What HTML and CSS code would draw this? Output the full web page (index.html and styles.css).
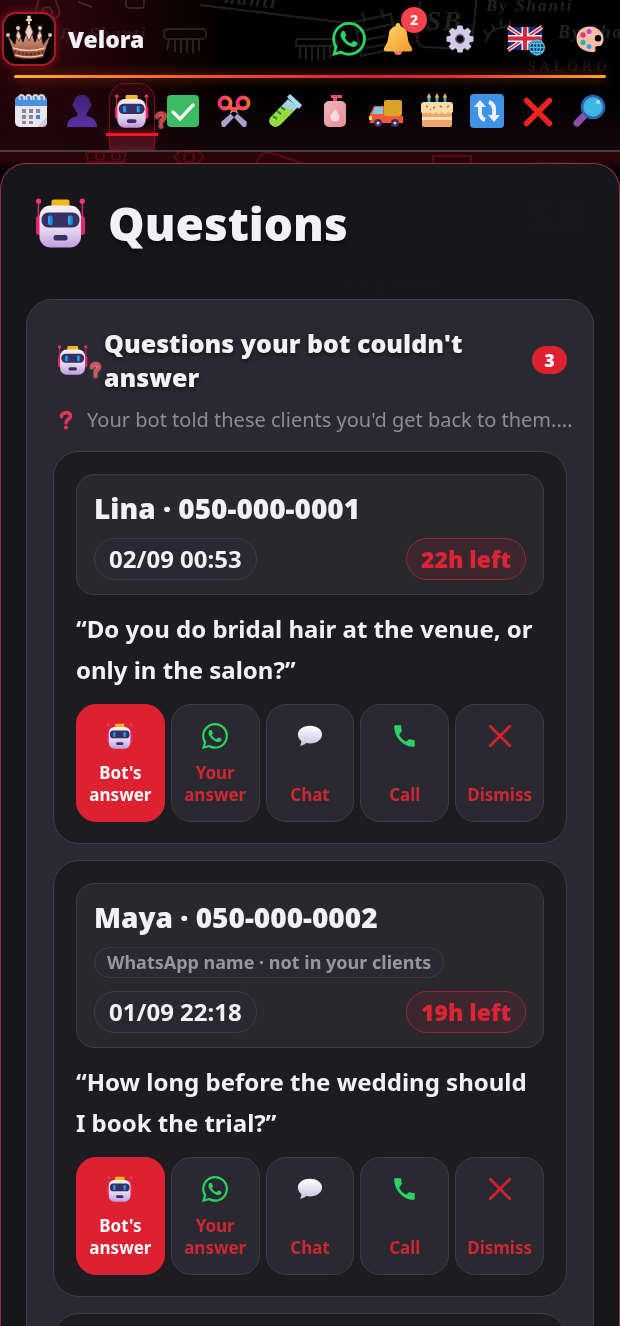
FILE: index.html
```html
<!DOCTYPE html>
<html lang="en">
<head>
    <meta charset="UTF-8">
    <meta name="viewport" content="width=device-width, initial-scale=1.0">
    <title>Velora</title>
    <link rel="stylesheet" href="styles.css">
</head>
<body>
    <!-- icons -->
    <svg class="defs" aria-hidden="true">
        <defs>
            <linearGradient id="gHead" x1="0" y1="0" x2="0" y2="1"><stop offset="0" stop-color="#f6f0f7"/><stop offset=".6" stop-color="#e2d5ee"/><stop offset="1" stop-color="#c39be2"/></linearGradient>
            <linearGradient id="gEye" x1="0" y1="0" x2="1" y2="0"><stop offset="0" stop-color="#36b7f5"/><stop offset="1" stop-color="#0f6fc9"/></linearGradient>
            <linearGradient id="gBell" x1="0" y1="0" x2="1" y2="1"><stop offset="0" stop-color="#ffd768"/><stop offset="1" stop-color="#f39a2c"/></linearGradient>
            <linearGradient id="gRing" x1="0" y1="0" x2="1" y2="0"><stop offset="0" stop-color="#f0307c"/><stop offset="1" stop-color="#f5683a"/></linearGradient>
            <linearGradient id="gUser" x1="0" y1="0" x2="0" y2="1"><stop offset="0" stop-color="#3d2270"/><stop offset="1" stop-color="#5a2fa5"/></linearGradient>
            <linearGradient id="gCrown" x1="0" y1="0" x2="0" y2="1"><stop offset="0" stop-color="#d9b7a6"/><stop offset=".6" stop-color="#b5745c"/><stop offset="1" stop-color="#7c3626"/></linearGradient>
            <linearGradient id="gChat" x1="0" y1="0" x2="0" y2="1"><stop offset="0" stop-color="#ffffff"/><stop offset="1" stop-color="#c9c0e0"/></linearGradient>
            <linearGradient id="gSoap" x1="0" y1="0" x2="1" y2="1"><stop offset="0" stop-color="#f5b3b6"/><stop offset="1" stop-color="#e08f98"/></linearGradient>
        </defs>
        <symbol id="robot" viewBox="0 0 50 50">
            <path d="M2.4 4v20M46.400 4v20" stroke="#d62563" stroke-width="1.600"/>
            <circle cx="2.600" cy="3.200" r="2.600" fill="#f0356b"/><circle cx="46.200" cy="3.200" r="2.600" fill="#f0356b"/>
            <rect x="0" y="18" width="9" height="19" rx="3" fill="#e8256f"/><rect x="40" y="18" width="9" height="19" rx="3" fill="#e8256f"/>
            <rect x="15.500" y="1.600" width="18" height="9" rx="2" fill="#f7b51e"/>
            <rect x="3.500" y="7.500" width="41.500" height="42" rx="11" fill="url(#gHead)"/>
            <rect x="5.500" y="14.500" width="38" height="15" rx="7" fill="#382f63"/>
            <rect x="12" y="17.500" width="5" height="9.500" rx="2" fill="url(#gEye)"/><rect x="32" y="17.500" width="5" height="9.500" rx="2" fill="url(#gEye)"/>
            <rect x="17.500" y="37" width="14" height="5.500" rx="2.500" fill="#382f63"/>
        </symbol>
        <symbol id="qmark" viewBox="0 0 14 20">
            <path d="M2.500 6.500C2 2 11.500 1 11.500 6c0 3.500-4.500 3-4.500 7" fill="none" stroke="currentColor" stroke-width="3.600" stroke-linecap="round"/>
            <circle cx="7" cy="17.600" r="2.100" fill="currentColor"/>
        </symbol>
        <symbol id="whatsapp" viewBox="0 0 24 24">
            <path fill="#2bd366" d="M17.472 14.382c-.297-.149-1.758-.867-2.030-.967-.273-.099-.471-.148-.670.150-.197.297-.767.966-.940 1.164-.173.199-.347.223-.644.075-.297-.150-1.255-.463-2.390-1.475-.883-.788-1.480-1.761-1.653-2.059-.173-.297-.018-.458.130-.606.134-.133.298-.347.446-.520.149-.174.198-.298.298-.497.099-.198.050-.371-.025-.520-.075-.149-.669-1.612-.916-2.207-.242-.579-.487-.500-.669-.510-.173-.008-.371-.010-.570-.010-.198 0-.520.074-.792.372-.272.297-1.040 1.016-1.040 2.479 0 1.462 1.065 2.875 1.213 3.074.149.198 2.096 3.200 5.077 4.487.709.306 1.262.489 1.694.625.712.227 1.360.195 1.871.118.571-.085 1.758-.719 2.006-1.413.248-.694.248-1.289.173-1.413-.074-.124-.272-.198-.570-.347m-5.421 7.403h-.004a9.870 9.870 0 01-5.031-1.378l-.361-.214-3.741.982.998-3.648-.235-.374a9.860 9.860 0 01-1.510-5.260c.001-5.450 4.436-9.884 9.888-9.884 2.640 0 5.122 1.030 6.988 2.898a9.825 9.825 0 012.893 6.994c-.003 5.450-4.437 9.884-9.885 9.884m8.413-18.297A11.815 11.815 0 0012.050 0C5.495 0 .160 5.335.157 11.892c0 2.096.547 4.142 1.588 5.945L.057 24l6.305-1.654a11.882 11.882 0 005.683 1.448h.005c6.554 0 11.890-5.335 11.893-11.893a11.821 11.821 0 00-3.480-8.413z"/>
        </symbol>
        <symbol id="chat" viewBox="0 0 28 24">
            <path d="M14 1c7.500 0 13 4 13 9.500S21.500 20 14 20c-1.500 0-3-.2-4.300-.5C8 21.500 5.500 22.500 3 22.500c1.300-1.500 1.800-3.200 1.600-5C2.300 15.700 1 13.200 1 10.500 1 5 6.500 1 14 1z" fill="url(#gChat)"/>
        </symbol>
        <symbol id="phone" viewBox="0 0 24 24">
            <path fill="#2bd366" d="M6.600 10.800c1.500 2.800 3.800 5.200 6.600 6.600l2.200-2.200c.3-.3.700-.4 1-.2 1.100.4 2.300.6 3.600.6.600 0 1 .4 1 1V21c0 .6-.4 1-1 1C10.600 22 2 13.400 2 3c0-.6.400-1 1-1h4.500c.6 0 1 .4 1 1 0 1.300.2 2.500.6 3.600.1.300 0 .7-.2 1z"/>
        </symbol>
        <symbol id="close" viewBox="0 0 24 24">
            <path d="M3 3l18 18M21 3l-18 18" fill="none" stroke="#d0222f" stroke-width="2.600" stroke-linecap="round"/>
        </symbol>
    </svg>

    <!-- background doodles -->
    <svg class="doodles" viewBox="0 0 620 330" aria-hidden="true">
        <g class="doodle-lines">
            <path d="M36 10l3-12h16l4 12q2 8-6 8H42q-8 0-6-8zM42 12a5 5 0 1010 0a5 5 0 10-10 0M126 -4v9q0 3 4 3h10q4 0 4-3v-9M78 2l14 5M168 29h34q4 0 4 4v3q0 3-4 3h-34q-4 0-4-4v-2q0-4 4-4zM169 40l-2 10M175 40v12M181 40v13M187 40v13M193 40v13M199 40v11"/>
            <path d="M200 5l155 19M298 39h36q3 0 3 3v4h-41v-4q0-3 2-3zM300 47v12M306 47v13M312 47v14M318 47v14M324 47v13M330 47v12"/>
            <path d="M355 22l36-8 6 34-36 8zM357 32l35-8M362 12l3 10M381 9l3 10M364 40l22-4M366 48l22-4M426 -5l45 2q6 1 5 8l-4 36q-1 8-8 8l-39-2q-8-1-8-8l3-38"/>
            <path d="M486 42q2-14 20-15M484 30l5 8M492 24l3 7M501 20v7M510 20l-1 8"/>
        </g>
        <g class="doodle-lines doodle-red">
            <path d="M86 152h40l-2 10H88zM96 156a4 4 0 108 0a4 4 0 10-8 0M112 156a4 4 0 108 0a4 4 0 10-8 0M174 157l6-6h18l6 6-6 6h-18zM184 157a5 5 0 1010 0a5 5 0 10-10 0M256 164q4-14 16-11l32 11M433 164v-8h38v10M433 164v14h38v-14M525 164q30-2 60 0"/>
            <path d="M510 176v78q0 12 12 12h76M40 190h60v40H40zM250 180l40 30M270 275h38v14h-38z"/>
        </g>
        <g class="doodle-text">
            <text x="60" y="39" font-size="17" opacity=".6">By Shanti</text>
            <text x="224" y="3" font-size="20" transform="rotate(6 224 3)">hanti</text>
            <text x="426" y="30" font-size="27">SB</text>
            <text x="486" y="11" font-size="17">By Shanti</text>
            <text x="558" y="38" font-size="18">By Shanti</text>
            <text class="caps" x="528" y="71" font-size="14" opacity=".6">SALORO</text>
            <text x="526" y="232" font-size="46">SB</text>
            <text class="caps" x="345" y="292" font-size="18">SALORO</text>
        </g>
    </svg>

    <div class="app">
        <header class="header">
            <div class="topbar">
                <a href="#" class="brand">
                    <span class="logo">
                        <svg viewBox="0 0 50 50">
                            <ellipse cx="25" cy="42" rx="15" ry="3" fill="#a3181c"/>
                            <path d="M11 43L4 22l7 9 3-14 5 12 6-17 6 17 5-12 3 14 7-9-7 21q-14 4-28 0z" fill="url(#gCrown)"/>
                            <path d="M25 9l-4 9 4 9 4-9zM14 16l-2 6 3 5 2-5zM36 16l-3 6 2 5 3-5z" fill="#ead5c9" stroke="#7a4a3c" stroke-width="1"/>
                            <path d="M25 3v7M22 6h6" stroke="#e9d2c5" stroke-width="2"/>
                            <circle cx="25" cy="3.500" r="2" fill="#e9cfc3"/><circle cx="14" cy="14" r="2" fill="#e9cfc3"/><circle cx="36" cy="14" r="2" fill="#e9cfc3"/><circle cx="4" cy="21" r="2" fill="#d9b9aa"/><circle cx="46" cy="21" r="2" fill="#d9b9aa"/>
                            <path d="M9 34q16 5 32 0M11 41q14 4 28 0" fill="none" stroke="#efc7b2" stroke-width="1.400"/>
                            <path d="M10 37.500q15 5 30 0" fill="none" stroke="#5f2a20" stroke-width="2" stroke-dasharray="2 2"/>
                        </svg>
                    </span>
                    <span class="brand-name">Velora</span>
                </a>
                <div class="tools">
                    <div class="tools-chat">
                        <button class="tool" aria-label="WhatsApp"><svg width="34" height="34"><use href="#whatsapp"/></svg></button>
                        <button class="tool" aria-label="Notifications">
                            <svg width="32" height="32" viewBox="0 0 32 32">
                                <circle cx="16" cy="28" r="4" fill="#f2786b"/>
                                <path d="M16 0q2.500 0 2.500 3 6.500 2 7 10 .5 7 4 11 2 3.500-1 4.500h-25q-3-1-1-4.500 3.500-4 4-11 .5-8 7-10 0-3 2.500-3z" fill="url(#gBell)"/>
                            </svg>
                            <span class="count">2</span>
                        </button>
                    </div>
                    <button class="tool" aria-label="Settings">
                        <svg width="28" height="28" viewBox="0 0 28 28">
                            <g fill="#d5cae6"><path id="tooth" d="M11.500 0.500h5l1 5h-7zM11.500 27.500h5l1-5h-7z"/><use href="#tooth" transform="rotate(45 14 14)"/><use href="#tooth" transform="rotate(90 14 14)"/><use href="#tooth" transform="rotate(135 14 14)"/></g>
                            <circle cx="14" cy="14" r="7.400" fill="#08070a" stroke="#d5cae6" stroke-width="6"/>
                            <circle cx="14" cy="14" r="4.200" fill="#08070a" stroke="#6d6580" stroke-width="1.200"/>
                        </svg>
                    </button>
                    <button class="tool" aria-label="Language">
                        <svg width="38" height="34" viewBox="0 0 38 34">
                            <rect x="2" y="5" width="34" height="23" fill="#1d2a73"/>
                            <path d="M2 5l34 23M36 5L2 28" stroke="#f4f1f5" stroke-width="4"/>
                            <path d="M2 5l34 23M36 5L2 28" stroke="#d92840" stroke-width="1.600"/>
                            <path d="M19 5v23M2 16.500h34" stroke="#f4f1f5" stroke-width="7"/>
                            <path d="M19 5v23M2 16.500h34" stroke="#d92840" stroke-width="4"/>
                            <circle cx="31" cy="25.500" r="8" fill="#0a2f45"/>
                            <g fill="none" stroke="#55bdf0" stroke-width="1.300"><circle cx="31" cy="25.500" r="7.300"/><ellipse cx="31" cy="25.500" rx="3.500" ry="7.300"/><path d="M31 18v15M23.700 25.500h14.600M25 21.500h12M25 29.500h12"/></g>
                        </svg>
                    </button>
                    <button class="tool" aria-label="Theme">
                        <svg width="28" height="28" viewBox="0 0 28 28">
                            <path fill-rule="evenodd" d="M13 1.500C20 1 27 6 27.500 13c.3 5-2 8.500-5 8-2.500-.5-4 1-3 3.500.5 2-1.500 3-4.500 2.500C6 26 0 21 .5 13 1 6 6 2 13 1.500zM22 10a3.200 3.200 0 100 6.400 3.200 3.200 0 000-6.400z" fill="#f7bda5"/>
                            <circle cx="7" cy="10" r="2.700" fill="#e23673"/><circle cx="13" cy="6.500" r="2.500" fill="#b04fd8"/><circle cx="7" cy="17.500" r="2.700" fill="#2fb5a6"/><circle cx="13" cy="21.500" r="2.500" fill="#3f9be8"/>
                        </svg>
                    </button>
                </div>
            </div>
            <div class="rule"></div>
            <nav class="nav">
                <a href="#" class="tab" aria-label="Calendar">
                    <svg viewBox="0 0 34 34">
                        <rect x="1" y="2" width="32" height="31" rx="5" fill="#e9e6f0"/><path d="M1 12V7q0-5 5-5h22q5 0 5 5v5z" fill="#4a8fe0"/>
                        <g fill="none" stroke="#d9d9e4" stroke-width="1.800"><path d="M6 6q-2-5 1.500-5T10 6M13 6q-2-5 1.500-5T17 6M20 6q-2-5 1.500-5T24 6M26 6q-2-5 1.500-5T30 6"/></g>
                        <path d="M8 15h4v4H8zM15 15h4v4h-4zM22 15h4v4h-4zM8 21h4v4H8zM15 21h4v4h-4zM8 27h4v3H8zM15 27h4v3h-4z" fill="#8a879a"/><path d="M22 21h4v4h-4z" fill="#2c86dd"/><path d="M23 33l10-10v5q0 5-5 5z" fill="#cfccd8"/>
                    </svg>
                </a>
                <a href="#" class="tab" aria-label="Clients">
                    <svg viewBox="0 0 34 34"><path d="M17 1c5.500 0 8 3.500 8 7.500 2 0 2 5-.5 5.500-.6 2.500-1.700 3.800-3 5v3c6 1 10.500 4 10.500 11H2c0-7 4.500-10 10.500-11v-3c-1.300-1.200-2.400-2.500-3-5C7 13.500 7 8.500 9 8.500 9 4.500 11.500 1 17 1z" fill="url(#gUser)"/></svg>
                </a>
                <a href="#" class="tab active" aria-label="Questions" aria-current="page">
                    <svg viewBox="0 0 50 50"><use href="#robot"/></svg>
                    <svg class="tab-mark"><use href="#qmark"/></svg>
                </a>
                <a href="#" class="tab" aria-label="Tasks">
                    <svg viewBox="0 0 34 34"><rect x="1" y="1" width="32" height="32" rx="4" fill="#3dbb63"/><path d="M7 18l7 7 13-14" fill="none" stroke="#f1f5f2" stroke-width="3.400" stroke-linecap="round"/></svg>
                </a>
                <a href="#" class="tab" aria-label="Services">
                    <svg viewBox="0 0 34 34">
                        <path d="M15 15L30 28l-1 5h-3L13 19zM19 15L4 28l1 5h3l13-14z" fill="#a9a0c9"/>
                        <circle cx="8" cy="9" r="5.500" fill="none" stroke="url(#gRing)" stroke-width="4"/><circle cx="26" cy="9" r="5.500" fill="none" stroke="url(#gRing)" stroke-width="4"/>
                        <path d="M12 13l5 3 5-3" fill="none" stroke="#f5583f" stroke-width="4"/>
                    </svg>
                </a>
                <a href="#" class="tab" aria-label="Formulas">
                    <svg viewBox="0 0 34 34">
                        <path d="M20 5L2 24q-2 6 3 8 4 2 8-2L30 13z" fill="#a8cfe2"/><path d="M14 12L2 24q-2 6 3 8 4 2 8-2l13-14q-6 0-12-4z" fill="#92dc3c"/>
                        <path d="M19 3l3-3 12 11-3 4z" fill="#a5dcf5"/><path d="M13 13l4 3M9 17l4 3M5 22l4 3" stroke="#287f36" stroke-width="2"/>
                    </svg>
                </a>
                <a href="#" class="tab" aria-label="Products">
                    <svg viewBox="0 0 34 34"><path d="M13 1h11v3h-5v4h-4V4h-2z" fill="#e84b66"/><rect x="6" y="7" width="22" height="26" rx="5" fill="url(#gSoap)"/><path d="M17 15c3 4 4.500 6 4.500 8a4.500 4.500 0 01-9 0c0-2 1.500-4 4.500-8z" fill="#f8dadd"/></svg>
                </a>
                <a href="#" class="tab" aria-label="Suppliers">
                    <svg viewBox="0 0 34 34">
                        <path d="M1 20L5 12h12v17H1z" fill="#ef5a31"/><path d="M3 20l3-7h8v7z" fill="#7dc9ee"/><rect x="15" y="6" width="18" height="16" rx="2" fill="#dba325"/><path d="M1 22h33v7H1z" fill="#ef5a31"/><path d="M0 22h3v4H0z" fill="#ffd85b"/>
                        <circle cx="9" cy="29" r="4" fill="#3d2c5e"/><circle cx="26" cy="29" r="4" fill="#3d2c5e"/><circle cx="9" cy="29" r="1.600" fill="#d4cbe8"/><circle cx="26" cy="29" r="1.600" fill="#d4cbe8"/>
                    </svg>
                </a>
                <a href="#" class="tab" aria-label="Birthdays">
                    <svg viewBox="0 0 34 34">
                        <path d="M9 3v8M17 3v8M25 3v8" stroke="#2c9ebd" stroke-width="3"/><path d="M9-1l2 4-2 2-2-2zM17-1l2 4-2 2-2-2zM25-1l2 4-2 2-2-2z" fill="#f6b13c"/>
                        <rect x="2" y="12" width="30" height="21" rx="2" fill="#efa66c"/><path d="M2 23h30v3H2z" fill="#f8e0b8"/><path d="M1 11q0-3 3-3h26q3 0 3 3v7q-3 3-5 0-3 4-6 0-3 4-6 0-3 4-6 0-2 3-4 0-3 3-5 0z" fill="#f2dfa8"/>
                        <path d="M6 12l2 1M13 14l2-1M20 12l2 1M27 13l2-1M10 16l1-1" stroke="#e05574" stroke-width="1.400"/>
                    </svg>
                </a>
                <a href="#" class="tab" aria-label="Sync">
                    <svg viewBox="0 0 34 34"><rect x="0" y="0" width="34" height="34" rx="4" fill="#3e93e6"/><path d="M15 26Q9 24 10 15V12M19 8q6 2 5 11v3" fill="none" stroke="#f2f1f7" stroke-width="4"/><path d="M4 13l6-7 6 7zM18 21l6 7 6-7z" fill="#f2f1f7"/></svg>
                </a>
                <a href="#" class="tab" aria-label="Cancelled">
                    <svg viewBox="0 0 34 34"><path d="M5.500 6.500l23 23M28.500 6.500l-23 23" stroke="#e8241d" stroke-width="5.500" stroke-linecap="round"/></svg>
                </a>
                <a href="#" class="tab" aria-label="Search">
                    <svg viewBox="0 0 34 34"><path d="M13 21l-8 8" stroke="#8f4ea8" stroke-width="7" stroke-linecap="round"/><circle cx="21" cy="13" r="11" fill="#3fb6e2" stroke="#2865ae" stroke-width="2.600"/><circle cx="26" cy="8" r="2" fill="#a5e2f5"/></svg>
                </a>
            </nav>
        </header>

        <main class="panel">
            <div class="page-title">
                <svg width="50" height="50"><use href="#robot"/></svg>
                <h1>Questions</h1>
            </div>

            <section class="inbox">
                <div class="inbox-head">
                    <span class="bot">
                        <svg width="30" height="30"><use href="#robot"/></svg>
                        <svg class="bot-mark"><use href="#qmark"/></svg>
                    </span>
                    <h2>Questions your bot couldn't answer</h2>
                    <span class="total">3</span>
                </div>
                <div class="hint">
                    <svg width="14" height="20"><use href="#qmark"/></svg>
                    <p>Your bot told these clients you'd get back to them....</p>
                </div>

                <article class="card">
                    <div class="client">
                        <h3>Lina · 050-000-0001</h3>
                        <div class="meta">
                            <span class="pill">02/09 00:53</span>
                            <span class="pill left">22h left</span>
                        </div>
                    </div>
                    <p class="question">“Do you do bridal hair at the venue, or only in the salon?”</p>
                    <div class="actions">
                        <button class="action primary"><svg><use href="#robot"/></svg><span>Bot's answer</span></button>
                        <button class="action"><svg><use href="#whatsapp"/></svg><span>Your answer</span></button>
                        <button class="action"><svg><use href="#chat"/></svg><span>Chat</span></button>
                        <button class="action"><svg><use href="#phone"/></svg><span>Call</span></button>
                        <button class="action"><svg><use href="#close"/></svg><span>Dismiss</span></button>
                    </div>
                </article>

                <article class="card">
                    <div class="client">
                        <h3>Maya · 050-000-0002</h3>
                        <span class="note">WhatsApp name · not in your clients</span>
                        <div class="meta">
                            <span class="pill">01/09 22:18</span>
                            <span class="pill left">19h left</span>
                        </div>
                    </div>
                    <p class="question">“How long before the wedding should I book the trial?”</p>
                    <div class="actions">
                        <button class="action primary"><svg><use href="#robot"/></svg><span>Bot's answer</span></button>
                        <button class="action"><svg><use href="#whatsapp"/></svg><span>Your answer</span></button>
                        <button class="action"><svg><use href="#chat"/></svg><span>Chat</span></button>
                        <button class="action"><svg><use href="#phone"/></svg><span>Call</span></button>
                        <button class="action"><svg><use href="#close"/></svg><span>Dismiss</span></button>
                    </div>
                </article>

                <article class="card"></article>
            </section>
        </main>
    </div>
</body>
</html>
```
FILE: styles.css
```css
*{
  box-sizing: border-box;
  margin: 0;
  padding: 0;
}
body{
  background: #050304;
  color: #f3f1f6;
  font-family: "Noto Sans", "Open Sans", sans-serif;
}
button{
  border: none;
  background: none;
  font-family: inherit;
  cursor: pointer;
}
a{
  color: inherit;
  text-decoration: none;
}
svg{
  display: block;
  overflow: visible;
}
.defs{
  position: absolute;
  width: 0;
  height: 0;
}
.doodles{
  position: absolute;
  top: 0;
  left: 0;
  width: 100%;
  z-index: 1;
  overflow: hidden;
  pointer-events: none;
}
.doodle-lines{
  fill: none;
  stroke: #fff;
  stroke-width: 2;
  opacity: .12;
}
.doodle-red{
  stroke: #e01838;
  opacity: .25;
}
.doodle-text{
  fill: #fff;
  opacity: .13;
  font-family: "Liberation Serif", serif;
  font-style: italic;
  font-weight: bold;
  letter-spacing: 2px;
}
.caps{
  font-style: normal;
  letter-spacing: 4px;
}
.app{
  display: flex;
  flex-direction: column;
  height: 100vh;
  overflow: hidden;
  background: linear-gradient(#050304, #2a0409 160px, #050304 170px);
}

/* header */
.header{
  background: radial-gradient(circle at 5% 20%, #32060c, transparent 35%), linear-gradient(#000 60%, #12060a);
  border-bottom: 2px solid #444045;
}
.topbar{
  display: flex;
  justify-content: space-between;
  align-items: center;
  height: 75px;
  padding: 2px 16px 0 2px;
  position: relative;
  z-index: 2;
}
.brand{
  display: flex;
  align-items: center;
  gap: 12px;
}
.logo{
  width: 54px;
  height: 54px;
  border: 2px solid #a81c2a;
  border-radius: 14px;
  background: #080203;
  box-shadow: 0 0 8px #8a1220;
}
.brand-name{
  font-size: 23px;
  font-weight: 900;
}
.tools{
  display: flex;
  align-items: center;
  gap: 32px;
}
.tools-chat{
  display: flex;
  align-items: center;
  gap: 16px;
}
.tool{
  position: relative;
}
.count{
  position: absolute;
  top: -16px;
  right: -13px;
  width: 26px;
  height: 26px;
  border-radius: 50%;
  background: #f8444c;
  color: #fff;
  font-size: 14px;
  font-weight: 800;
  line-height: 26px;
}
.rule{
  height: 3px;
  margin: 0 14px;
  border-radius: 2px;
  background: linear-gradient(90deg, #fbb03b, #f4502a 33%, #d81f3e 60%, #e8302e 75%, #fba834);
  box-shadow: 0 0 12px #b4480f;
}
.nav{
  display: flex;
  justify-content: space-between;
  padding: 0 14px;
  height: 72px;
}
.tab{
  position: relative;
  width: 34px;
  padding-top: 16px;
}
.tab svg{
  position: relative;
  width: 34px;
  height: 34px;
}
.tab.active::before{
  content: "";
  position: absolute;
  top: 5px;
  bottom: 0;
  left: -6px;
  right: -6px;
  border: 1px solid #6f1422;
  border-bottom: none;
  border-radius: 16px 16px 0 0;
  background: linear-gradient(#30060e, #10030a 60%, #5a1722);
}
.tab.active::after{
  content: "";
  position: absolute;
  top: 55px;
  left: -9px;
  right: -9px;
  height: 3px;
  background: #fa1324;
  box-shadow: 0 0 8px #b0101c;
}
.tab .tab-mark{
  position: absolute;
  left: 40px;
  top: 33px;
  width: 12px;
  height: 18px;
  color: #e9343b;
  filter: drop-shadow(0 0 1px #fff);
  z-index: 1;
}

/* panel */
.panel{
  flex: 1;
  min-height: 0;
  margin-top: 11px;
  padding: 32px 25px 0;
  overflow: hidden;
  border: 1px solid #8d3344;
  border-bottom: none;
  border-radius: 26px 26px 0 0;
  background: #18171bf8;
  z-index: 1;
}
.page-title{
  display: flex;
  align-items: center;
  gap: 22px;
  height: 54px;
  padding-left: 10px;
  margin-bottom: 49px;
}
h1{
  font-size: 46px;
  font-weight: 900;
  line-height: 54px;
  text-shadow: 0 2px 5px #0009;
}
.inbox{
  padding: 26px;
  border: 1px solid #3d3c42;
  border-radius: 26px;
  background: #2a292f;
}
.inbox-head{
  display: flex;
  align-items: center;
  gap: 16px;
  padding-left: 5px;
}
.bot{
  position: relative;
}
.bot-mark{
  position: absolute;
  top: 17px;
  left: 32px;
  width: 11px;
  height: 16px;
  color: #f2474b;
  filter: drop-shadow(0 0 1px #fff);
}
h2{
  flex: 1;
  font-size: 25px;
  font-weight: 900;
  line-height: 34px;
  text-shadow: 0 2px 4px #0008;
}
.total{
  width: 35px;
  border-radius: 14px;
  background: #dd2130;
  color: #fff;
  font-size: 18px;
  font-weight: 900;
  line-height: 28px;
  text-align: center;
}
.hint{
  display: flex;
  align-items: center;
  gap: 14px;
  padding-left: 6px;
  margin: 10px -8px 15px 0;
  color: #8d8b93;
}
.hint svg{
  flex: none;
  color: #e0355a;
}
.hint p{
  overflow: hidden;
  white-space: nowrap;
  text-overflow: ellipsis;
  font-size: 20px;
  line-height: 32px;
}

/* question card */
.card{
  min-height: 200px;
  margin-bottom: 16px;
  padding: 22px 22px 21px;
  border: 1px solid #3d3c42;
  border-radius: 26px;
  background: #1d1c20;
}
.client{
  display: flex;
  flex-direction: column;
  align-items: flex-start;
  gap: 13px;
  padding: 16px 17px 14px;
  border: 1px solid #3d3c42;
  border-radius: 18px;
  background: #29282c;
}
h3{
  font-size: 28px;
  font-weight: 900;
  line-height: 34px;
}
.meta{
  display: flex;
  justify-content: space-between;
  align-self: stretch;
}
.pill,
.note{
  border: 1px solid #3d3c44;
  border-radius: 21px;
  background: #2a2930;
  font-weight: 700;
}
.pill{
  padding: 0 14px;
  font-size: 24px;
  line-height: 40px;
}
.left{
  border-color: #8f2a3a;
  background: #3d272e;
  color: #dd2434;
  font-size: 23px;
  font-weight: 900;
}
.note{
  padding: 0 12px;
  color: #97959d;
  font-size: 18px;
  line-height: 29px;
}
.question{
  margin: 13px 0 14px;
  padding-right: 8px;
  font-size: 24px;
  font-weight: 700;
  line-height: 41px;
}
.actions{
  display: grid;
  grid-template-columns: repeat(5, 1fr);
  gap: 6px;
}
.action{
  display: flex;
  flex-direction: column;
  align-items: center;
  justify-content: space-between;
  height: 118px;
  padding: 18px 4px 15px;
  border: 1px solid #3d3c43;
  border-radius: 20px;
  background: #2a292f;
  color: #cc2733;
  font-size: 17px;
  font-weight: 700;
  line-height: 22px;
}
.action svg{
  width: 26px;
  height: 26px;
}
.action.primary{
  border-color: #dd2130;
  background: #dd2130;
  color: #fff;
}
```
